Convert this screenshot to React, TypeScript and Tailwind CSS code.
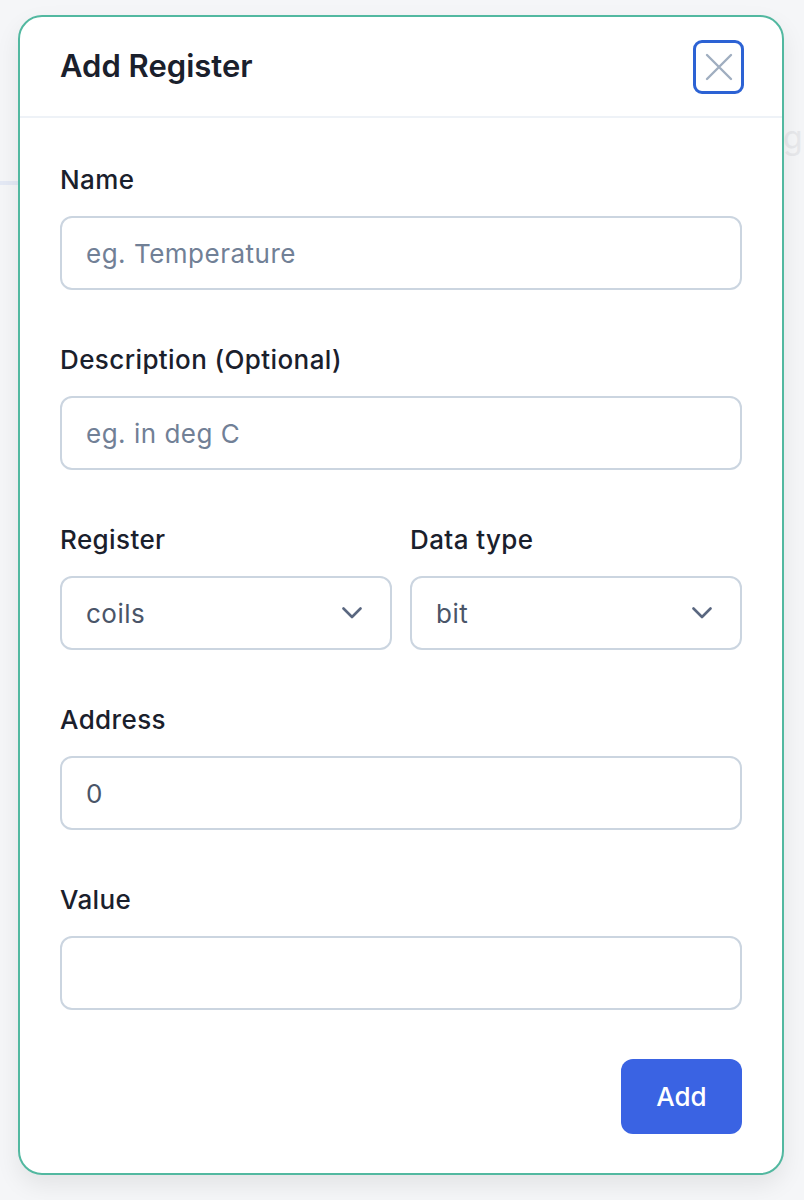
import React from "react";

const labelCls = "h-[36px] text-[26px] leading-[36px] font-medium tracking-[0.4px] text-[#1a202c]";

function Field({ label, placeholder, value }: { label: string; placeholder?: string; value?: string }) {
  return (
    <div className="flex flex-col">
      <label className={labelCls}>{label}</label>
      <input
        readOnly
        defaultValue={value}
        placeholder={placeholder}
        className="mt-[18px] h-[74px] w-full rounded-[12px] border-2 border-[#cbd5e0] bg-white px-[24px] text-[26px] tracking-[0.5px] text-[#4a5568] placeholder:text-[#718096] outline-none"
      />
    </div>
  );
}

function SelectField({ label, value }: { label: string; value: string }) {
  return (
    <div className="flex flex-col">
      <label className={labelCls}>{label}</label>
      <div className="mt-[18px] flex h-[74px] w-full items-center justify-between rounded-[12px] border-2 border-[#cbd5e0] bg-white pl-[24px] pr-[28px] text-[26px] tracking-[0.5px] text-[#4a5568]">
        <span>{value}</span>
        <svg width="20" height="12" viewBox="0 0 20 12" fill="none">
          <path d="M1.5 1.5 L10 10 L18.5 1.5" stroke="#5a6780" strokeWidth="2.6" strokeLinecap="round" strokeLinejoin="round" />
        </svg>
      </div>
    </div>
  );
}

export default function App() {
  return (
    <div
      className="relative min-h-[1200px] w-full overflow-hidden bg-[#f5f6f8] pt-[15px] pl-[18px] pr-[20px]"
      style={{ fontFamily: "Inter, 'Noto Sans', sans-serif" }}
    >
      <div className="absolute left-0 top-[181px] h-[4px] w-[40px] bg-[#e4e9f5]" />
      <div className="absolute left-[764px] top-[118px] text-[32px] leading-[40px] text-[#e7e8eb]">ng</div>

      <div className="relative z-10 flex h-[1160px] w-[766px] flex-col rounded-[24px] border-2 border-[#52b8a0] bg-white shadow-[0_10px_24px_rgba(0,0,0,0.08)]">
        <div className="flex h-[101px] items-center justify-between border-b-2 border-[#eef2f7] pl-[40px] pr-[38px]">
          <h2 className="text-[31px] font-semibold text-[#1a202c]">Add Register</h2>
          <button className="flex h-[54px] w-[51px] items-center justify-center rounded-[9px] border-[3px] border-[#2c62d4] bg-white">
            <svg width="28" height="28" viewBox="0 0 28 28" fill="none">
              <path d="M2 2 L26 26 M26 2 L2 26" stroke="#a0aec0" strokeWidth="2.4" strokeLinecap="round" />
            </svg>
          </button>
        </div>

        <div className="flex flex-1 flex-col px-[40px] pt-[44px] pb-[39px]">
          <div className="flex flex-col gap-[52px]">
            <Field label="Name" placeholder="eg. Temperature" />
            <Field label="Description (Optional)" placeholder="eg. in deg C" />
            <div className="grid grid-cols-2 gap-[18px]">
              <SelectField label="Register" value="coils" />
              <SelectField label="Data type" value="bit" />
            </div>
            <Field label="Address" value="0" />
            <Field label="Value" />
          </div>
          <div className="mt-[49px] flex justify-end">
            <button className="h-[75px] w-[121px] rounded-[12px] bg-[#3a63e3] text-[26px] font-medium text-white">Add</button>
          </div>
        </div>
      </div>
    </div>
  );
}
